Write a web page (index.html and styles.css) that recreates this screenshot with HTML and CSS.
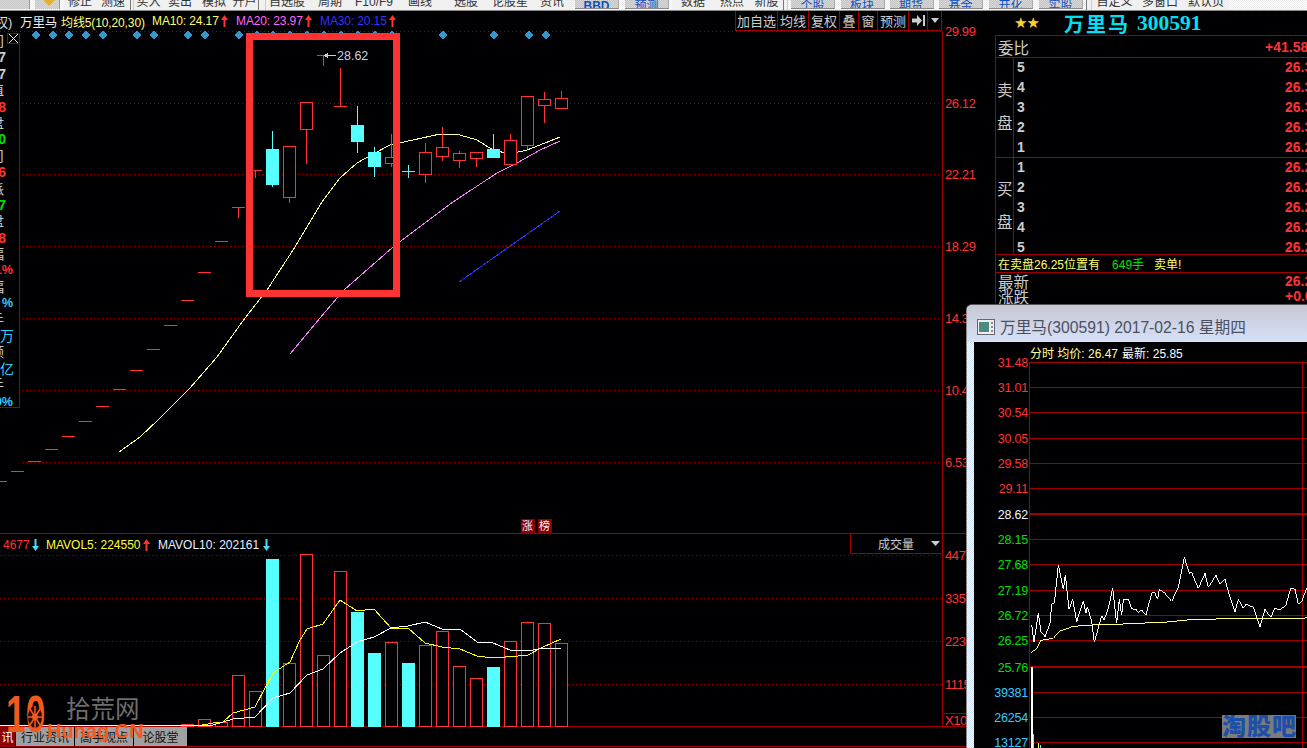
FILE: index.html
```html
<!DOCTYPE html>
<html lang="zh">
<head>
<meta charset="utf-8">
<title>万里马 300591</title>
<link rel="stylesheet" href="styles.css">
</head>
<body>
<div class="app">
  <svg class="defs" width="0" height="0" aria-hidden="true">
    <symbol id="arrow-up" viewBox="0 0 7 12"><path d="M3.5 0L7 5H4.5V12H2.5V5H0Z"/></symbol>
    <symbol id="arrow-down" viewBox="0 0 7 12"><path d="M3.5 12L7 7H4.5V0H2.5V7H0Z"/></symbol>
  </svg>

  <nav class="toolbar">
    <span class="tb-pic"></span>
    <span class="tb-pic tb-pic-gem"><svg width="25" height="10" viewBox="0 0 25 10"><path d="M8 0H20L14 6Z" fill="#e8b030"/></svg></span>
    <span class="tb">修正</span><span class="tb">测速</span><span class="tb-sep"></span>
    <span class="tb">买入</span><span class="tb">卖出</span><span class="tb">模拟</span><span class="tb">开户</span><span class="tb-sep"></span>
    <span class="tb">自选股</span><span class="tb">周期</span><span class="tb">F10/F9</span><span class="tb">画线</span><span class="tb">选股</span><span class="tb">论股星</span><span class="tb">资讯</span>
    <span class="tb-btn tb-strong">BBD</span><span class="tb-btn">预测</span>
    <span class="tb">数据</span><span class="tb">热点</span><span class="tb">新股</span><span class="tb-sep"></span>
    <span class="tb-btn">个股</span><span class="tb-btn">板块</span><span class="tb-btn">期货</span><span class="tb-btn">基金</span><span class="tb-btn">开化</span><span class="tb-btn">实股</span><span class="tb-sep"></span>
    <span class="tb">自定义</span><span class="tb">多窗口</span><span class="tb">默认页</span>
  </nav>

  <main class="workspace">
    <section class="chart-col">
      <header class="info-row">
        <div class="legend">
          <span class="lg lg-stub">权)</span>
          <span class="lg lg-name">万里马</span>
          <span class="lg lg-ma">均线5(10,20,30)</span>
          <span class="lg lg-10">MA10: 24.17</span><svg class="arr arr-up"><use href="#arrow-up"/></svg>
          <span class="lg lg-20">MA20: 23.97</span><svg class="arr arr-up"><use href="#arrow-up"/></svg>
          <span class="lg lg-30">MA30: 20.15</span><svg class="arr arr-up"><use href="#arrow-up"/></svg>
        </div>
        <div class="chart-btns">
          <span class="cb cb-3">加自选</span><span class="cb cb-2">均线</span><span class="cb cb-2">复权</span><span class="cb cb-1">叠</span><span class="cb cb-1">窗</span><span class="cb cb-2">预测</span>
          <span class="cb cb-1"><svg width="13" height="11" viewBox="0 0 13 11"><path d="M0 3.500H5V0L10 5.500L5 11V7.500H0Z M11 0H13V11H11Z" fill="#ccc"/></svg></span>
          <span class="cb cb-drop"><svg width="8" height="5" viewBox="0 0 8 5"><path d="M0 0H8L4 5Z" fill="#ccc"/></svg></span>
        </div>
      </header>

      <div class="price-pane">
        <svg class="plot" width="995" height="503" viewBox="0 31 995 503">
          <path class="dot" d="M0 31.500H942M22 103.500H942M22 174.500H942M22 246.500H942M22 318.500H942M22 390.500H942M22 462.500H942"/>
          <path class="solid" d="M942.500 31V534M0 533.500H995"/>
          <g class="diamonds">
            <path d="M36 30.500l4.500 4.500-4.500 4.500-4.500-4.500ZM53 30.500l4.500 4.500-4.500 4.500-4.500-4.500ZM69 30.500l4.500 4.500-4.500 4.500-4.500-4.500ZM86 30.500l4.500 4.500-4.500 4.500-4.500-4.500ZM103 30.500l4.500 4.500-4.500 4.500-4.500-4.500ZM137 30.500l4.500 4.500-4.500 4.500-4.500-4.500ZM154 30.500l4.500 4.500-4.500 4.500-4.500-4.500ZM188 30.500l4.500 4.500-4.500 4.500-4.500-4.500ZM205 30.500l4.500 4.500-4.500 4.500-4.500-4.500ZM239 30.500l4.500 4.500-4.500 4.500-4.500-4.500ZM257 30.500l4.500 4.500-4.500 4.500-4.500-4.500ZM273 30.500l4.500 4.500-4.500 4.500-4.500-4.500ZM290 30.500l4.500 4.500-4.500 4.500-4.500-4.500ZM307 30.500l4.500 4.500-4.500 4.500-4.500-4.500ZM324 30.500l4.500 4.500-4.500 4.500-4.500-4.500ZM341 30.500l4.500 4.500-4.500 4.500-4.500-4.500ZM358 30.500l4.500 4.500-4.500 4.500-4.500-4.500ZM375 30.500l4.500 4.500-4.500 4.500-4.500-4.500ZM392 30.500l4.500 4.500-4.500 4.500-4.500-4.500ZM443 30.500l4.500 4.500-4.500 4.500-4.500-4.500ZM494 30.500l4.500 4.500-4.500 4.500-4.500-4.500ZM529 30.500l4.500 4.500-4.500 4.500-4.500-4.500ZM546 30.500l4.500 4.500-4.500 4.500-4.500-4.500Z"/>
          </g>
          <path class="ma ma10" d="M119 452L140 437L158 420L190 388L217 357L245 318L267 290L295 247L322 202L340 178L357 163L375 153L390 145L413 140L440 134L460 135L477 140L493 150L510 154L527 150L545 143L560 137"/>
          <path class="ma ma20" d="M290 354L320 318L344 290L393 247L453 202L497 173L517 163L540 150L560 141"/>
          <path class="ma ma30" d="M459 282L560 211"/>
          <path class="wick" d="M0 481.500H7M11 471.500H24M28 461.500H41M45 449.500H58M62 436.500H75M79 421.500H92M96 406.500H109M113 389.500H126M130 370.500H143M147 349.500H160M164 325.500H177M181 300.500H194M198 272.500H211M215 241.500H228M232 207.500H245M249 170.500H262M317 55.500H329M334 106.500H347M238.500 207V218M255.500 170V178M289.500 197V203M306.500 129V164M323.500 55V66M340.500 68V106M391.500 134V157M391.500 163V167M425.500 143V152M425.500 174V183M442.500 127V147M442.500 156V161M459.500 151V153M459.500 160V168M476.500 158V167M510.500 134V140M527.500 145V149M544.500 92V99M544.500 105V123M561.500 91V98M561.500 108V109"/>
          <g class="up">
            <rect x="283.500" y="146.500" width="12" height="51"/><rect x="300.500" y="102.500" width="12" height="27"/><rect x="385.500" y="157.500" width="12" height="6"/><rect x="419.500" y="152.500" width="12" height="22"/><rect x="436.500" y="147.500" width="12" height="9"/><rect x="453.500" y="153.500" width="12" height="7"/><rect x="470.500" y="152.500" width="12" height="6"/><rect x="504.500" y="140.500" width="12" height="24"/><rect x="521.500" y="96.500" width="12" height="49"/><rect x="538.500" y="99.500" width="12" height="6"/><rect x="555.500" y="98.500" width="12" height="10"/>
          </g>
          <path class="wick-down" d="M272.500 131V187M357.500 106V153M374.500 147V177M408.500 165V178M402 171.500H415M493.500 134V149"/>
          <g class="down">
            <rect x="266" y="149" width="13" height="36"/><rect x="351" y="125" width="13" height="17"/><rect x="368" y="152" width="13" height="15"/><rect x="487" y="149" width="13" height="9"/>
          </g>
          <path class="peak-line" d="M324 55.500H336"/><path class="peak-head" d="M324 55.500L328 52.500V58.500Z"/>
          <text class="t-peak" x="337" y="60">28.62</text>
          <rect class="highlight" x="249.500" y="36.500" width="147" height="257"/>
          <g class="t-axis">
            <text x="945" y="36">29.99</text><text x="945" y="108">26.12</text><text x="945" y="179">22.21</text><text x="945" y="251">18.29</text><text x="945" y="323">14.37</text><text x="945" y="395">10.45</text><text x="945" y="467">6.53</text>
          </g>
          <rect class="badge" x="521" y="519" width="14" height="14"/><rect class="badge" x="538" y="519" width="14" height="14"/>
          <text class="t-badge" x="522" y="530">涨</text><text class="t-badge" x="539" y="530">榜</text>
        </svg>
        <aside class="stats">
          <span class="close-box"><svg width="11" height="10" viewBox="0 0 11 10"><path d="M1 0L10 9M10 0L1 9" stroke="#eee" fill="none"/></svg></span>
          <span class="st st-l">间</span><span class="st st-v st-w">7</span><span class="st st-v st-w">7</span><span class="st st-l">值</span><span class="st st-v st-r">8</span><span class="st st-l">盘</span><span class="st st-v st-g">0</span><span class="st st-l">司</span><span class="st st-v st-r">6</span><span class="st st-l">派</span><span class="st st-v st-g">7</span><span class="st st-l">盘</span><span class="st st-v st-r">8</span><span class="st st-l">幅</span><span class="st st-p st-r">1%</span><span class="st st-l">幅</span><span class="st st-p st-c">%</span><span class="st st-l">手</span><span class="st st-u">万</span><span class="st st-l">额</span><span class="st st-u">亿</span><span class="st st-l">手</span><span class="st st-p st-c">0%</span>
        </aside>
      </div>

      <div class="vol-pane">
        <svg class="plot" width="995" height="193" viewBox="0 534 995 193">
          <path class="dot" d="M0 555.500H942M0 598.500H942M0 641.500H942M0 684.500H942"/>
          <path class="solid" d="M942.500 534V727M850.500 534V553M850 553.500H942M0 726.500H995M943 713.500H995"/>
          <path class="wick" d="M0 725.500H7M11 725.500H24M28 725.500H41M45 725.500H58M62 725.500H75M79 725.500H92M96 725.500H109M113 725.500H126M130 725.500H143M147 725.500H160M164 725.500H177"/>
          <g class="up">
            <rect x="181.500" y="724.500" width="12" height="2"/><rect x="198.500" y="719.500" width="12" height="7"/><rect x="215.500" y="722.500" width="12" height="4"/><rect x="232.500" y="675.500" width="12" height="51"/><rect x="249.500" y="691.500" width="12" height="35"/><rect x="283.500" y="663.500" width="12" height="63"/><rect x="300.500" y="554.500" width="12" height="172"/><rect x="317.500" y="655.500" width="12" height="71"/><rect x="334.500" y="571.500" width="12" height="155"/><rect x="385.500" y="642.500" width="12" height="84"/><rect x="419.500" y="645.500" width="12" height="81"/><rect x="436.500" y="631.500" width="12" height="95"/><rect x="453.500" y="666.500" width="12" height="60"/><rect x="470.500" y="678.500" width="12" height="48"/><rect x="504.500" y="641.500" width="12" height="85"/><rect x="521.500" y="622.500" width="12" height="104"/><rect x="538.500" y="623.500" width="12" height="103"/><rect x="555.500" y="643.500" width="12" height="83"/>
          </g>
          <g class="down">
            <rect x="266" y="559" width="13" height="168"/><rect x="351" y="612" width="13" height="115"/><rect x="368" y="653" width="13" height="74"/><rect x="402" y="663" width="13" height="64"/><rect x="487" y="667" width="13" height="60"/>
          </g>
          <path class="ma vol5" d="M0 725.500H200L213 723L223 722L233 713L255 707L273 673L290 662L300 640L307 629L323 624L340 600L357 611L374 609L391 628L408 628L425 643L442 647L460 649L477 656L493 658L518 656L528 655L543 647L561 639"/>
          <path class="ma vol10" d="M0 725.500H200L213 725L233 719L255 717L273 698L290 693L307 675L323 669L340 653L357 642L374 637L391 628L408 626L425 622L442 629L460 629L477 642L493 643L510 650L528 651L543 648L561 648"/>
          <g class="t-axis">
            <text x="945" y="560">447</text><text x="945" y="603">335</text><text x="945" y="646">223</text><text x="945" y="689">1115</text><text x="945" y="725">X10</text>
          </g>
        </svg>
        <div class="vol-head">
          <span class="vh vh-r">4677</span><svg class="arr arr-down"><use href="#arrow-down"/></svg>
          <span class="vh vh-y">MAVOL5: 224550</span><svg class="arr arr-up"><use href="#arrow-up"/></svg>
          <span class="vh vh-w">MAVOL10: 202161</span><svg class="arr arr-down"><use href="#arrow-down"/></svg>
        </div>
        <div class="vol-select"><span>成交量</span><svg width="9" height="5" viewBox="0 0 9 5"><path d="M0 0H9L4.500 5Z" fill="#ccc"/></svg></div>
      </div>

      <div class="tabs">
        <span class="tab tab-on">讯</span><span class="tab tab-a">行业资讯</span><span class="tab tab-a">高手观点</span><span class="tab tab-b">论股堂</span>
      </div>

      <div class="wm">
        <div class="wm-ten"><span class="wm-num">10</span>
          <svg class="wm-gear" width="16" height="24" viewBox="0 0 16 24"><ellipse cx="8" cy="12" rx="7" ry="11" fill="#2a0a04"/><path d="M8 1V23M1 12H15M3 4L13 20M13 4L3 20" stroke="#f05a1e" stroke-width="1.500"/><circle cx="8" cy="12" r="3" fill="#f05a1e"/></svg>
        </div>
        <div class="wm-text"><span class="wm-site">拾荒网</span><span class="wm-dom">Hunag.CN</span></div>
      </div>
    </section>

    <section class="quote">
      <div class="q-title"><span class="q-stars">★★</span><span class="q-name">万里马</span><span class="q-code">300591</span></div>
      <div class="q-box">
        <div class="q-ratio"><span class="q-label">委比</span><span class="q-ratio-v">+41.58</span></div>
        <div class="q-side q-side-sell">
          <div class="q-tag"><span>卖</span><span>盘</span></div>
          <div class="q-rows">
            <div class="q-row"><b>5</b><span>26.3</span></div><div class="q-row"><b>4</b><span>26.3</span></div><div class="q-row"><b>3</b><span>26.3</span></div><div class="q-row"><b>2</b><span>26.3</span></div><div class="q-row"><b>1</b><span>26.2</span></div>
          </div>
        </div>
        <div class="q-side q-side-buy">
          <div class="q-tag"><span>买</span><span>盘</span></div>
          <div class="q-rows">
            <div class="q-row"><b>1</b><span>26.2</span></div><div class="q-row"><b>2</b><span>26.2</span></div><div class="q-row"><b>3</b><span>26.2</span></div><div class="q-row"><b>4</b><span>26.2</span></div><div class="q-row"><b>5</b><span>26.2</span></div>
          </div>
        </div>
        <div class="q-msg"><span class="m-y">在卖盘26.25位置有</span><span class="m-g">649手</span><span class="m-y">卖单!</span></div>
        <div class="q-last"><span class="q-label">最新</span><span class="q-last-v">26.2</span></div>
        <div class="q-last"><span class="q-label">涨跌</span><span class="q-last-v">+0.0</span></div>
      </div>
    </section>

    <article class="float-win">
      <div class="fw-title">
        <svg width="18" height="16" viewBox="0 0 18 16"><rect x="0.500" y="0.500" width="17" height="15" fill="#eee" stroke="#667"/><rect x="2" y="3" width="10" height="10" fill="#4c8a80"/><path d="M14 3h2v2h-2zM14 7h2v2h-2zM14 11h2v2h-2z" fill="#889"/></svg>
        <span>万里马(300591) 2017-02-16 星期四</span>
      </div>
      <div class="fw-body">
        <svg class="plot" width="333" height="406" viewBox="974 342 333 406">
          <path class="fw-grid" d="M1029.500 362V748M1302.500 362V748M1029 362.500H1307M1029 387.500H1307M1029 412.500H1307M1029 438.500H1307M1029 463.500H1307M1029 488.500H1307M1029 539.500H1307M1029 564.500H1307M1029 590.500H1307M1029 615.500H1307M1029 640.500H1307M1029 692.500H1307M1029 717.500H1307M1029 742.500H1307"/>
          <path class="fw-thick" d="M1029 514H1307M1029 667H1307"/>
          <g transform="translate(960 530) scale(.33333)">
            <polyline class="tick tick-avg" points="213,368 228,358 243,331 280,325 300,303 340,289 400,285 460,285 510,280 600,278 680,270 800,266 1040,264"/>
            <polyline class="tick tick-price" points="215,285 222,335 235,250 243,305 255,320 270,280 275,222 283,220 295,105 310,178 316,135 327,238 338,208 350,275 370,213 378,250 382,230 395,275 403,337 425,257 432,270 445,235 458,175 470,280 478,208 485,255 490,210 505,208 515,236 530,240 535,248 545,240 558,255 575,190 583,185 593,208 598,178 615,190 635,214 655,172 673,82 688,130 695,128 715,175 735,130 745,172 768,136 780,162 795,148 810,202 825,245 835,208 850,235 858,222 880,232 900,290 915,238 932,262 945,235 960,240 978,225 992,175 1005,178 1015,222 1025,215 1040,175"/>
          </g>
          <path class="fw-v-w" d="M1032 667V748"/><path class="fw-v-c" d="M1033.500 734V748M1040.500 745V748"/><path class="fw-v-y" d="M1038.500 743V748"/>
          <g class="t-fw">
            <text class="c-r" x="1028" y="367">31.48</text><text class="c-r" x="1028" y="392">31.01</text><text class="c-r" x="1028" y="417">30.54</text><text class="c-r" x="1028" y="443">30.05</text><text class="c-r" x="1028" y="468">29.58</text><text class="c-r" x="1028" y="493">29.11</text>
            <text class="c-w" x="1028" y="519">28.62</text>
            <text class="c-g" x="1028" y="544">28.15</text><text class="c-g" x="1028" y="569">27.68</text><text class="c-g" x="1028" y="595">27.19</text><text class="c-g" x="1028" y="620">26.72</text><text class="c-g" x="1028" y="645">26.25</text><text class="c-g" x="1028" y="672">25.76</text>
            <text class="c-c" x="1028" y="697">39381</text><text class="c-c" x="1028" y="722">26254</text><text class="c-c" x="1028" y="747">13127</text>
          </g>
        </svg>
        <div class="fw-head"><span class="fh-y">分时 均价: 26.47</span><span class="fh-w">最新: 25.85</span></div>
        <div class="fw-mark">淘股吧</div>
      </div>
    </article>
  </main>
</div>
</body>
</html>
```

FILE: styles.css
```css
* { box-sizing: border-box; }
html, body { margin: 0; padding: 0; background: #000003; }
body { font-family: "Liberation Sans", "Noto Sans CJK SC", sans-serif; }
.app { width: 1307px; height: 748px; overflow: hidden; background: #000003; position: relative; }
.defs { position: absolute; }

/* toolbar, cut off by the top of the capture */
.toolbar {
  height: 11px; overflow: hidden; border-bottom: 1px solid #888;
  display: grid; align-items: start; font-size: 12px; color: #333;
  grid-template-columns: 30px 34px 32px 34px 4px 29px 34px 34px 27px 8px 42px 44px 44px 48px 44px 44px 40px 50px 50px 42px 36px 33px 5px 50px 49px 49px 50px 50px 50px 6px 45px 46px 46px;
  background: repeating-conic-gradient(#fff 0 25%, #ececec 0 50%) 0 0 / 2px 2px;
}
.tb { line-height: 12px; margin-top: -4px; text-align: center; white-space: nowrap; background: #f0f0f0; height: 16px; }
.tb-sep { height: 10px; border-left: 1px solid #777; border-right: 1px solid #ccc; background: #f0f0f0; }
.tb-btn {
  width: 44px; height: 9px; justify-self: center; text-align: center; color: #0d50c0;
  line-height: 12px; overflow: hidden; border-bottom: 1px solid #888; border-right: 1px solid #aaa;
  background: repeating-conic-gradient(#d8d8d8 0 25%, #c4c4c4 0 50%) 0 0 / 2px 2px;
}
.tb-strong { font-weight: bold; }
.tb-pic { height: 9px; background: repeating-conic-gradient(#d8d8d8 0 25%, #c8c8c8 0 50%) 0 0 / 2px 2px; border-right: 1px solid #999; }
.tb-pic-gem { margin-left: 5px; margin-right: 4px; }
.tb-pic-gem svg { display: block; }

/* workspace */
.workspace { display: flex; height: 737px; position: relative; }
.chart-col { width: 995px; flex: none; display: flex; flex-direction: column; position: relative; }
.plot { display: block; shape-rendering: crispEdges; overflow: visible; }

.info-row { height: 20px; flex: none; display: flex; justify-content: space-between; width: 942px; position: relative; z-index: 1; }
.legend { display: flex; align-items: center; font-size: 12px; height: 20px; }
.lg { white-space: nowrap; letter-spacing: -0.12px; }
.lg-stub { width: 25px; margin-left: -5px; color: #ddd; font-size: 13px; }
.lg-name { width: 41px; color: #eee; font-size: 12.500px; }
.lg-ma { width: 91px; color: #ffff80; }
.lg-10 { width: 69px; color: #ffff66; }
.lg-20 { width: 69px; color: #ff66ff; margin-left: 8px; }
.lg-30 { width: 69px; color: #3333ff; margin-left: 8px; }
.arr { width: 7px; height: 12px; flex: none; display: block; }
.arr-up { fill: #ff3333; }
.arr-down { fill: #44ddff; }
.chart-btns { display: flex; height: 20px; border-bottom: 1px solid #a00000; }
.cb {
  display: flex; align-items: center; justify-content: center; color: #ccc; font-size: 13px;
  border-left: 1px solid #a00000; white-space: nowrap;
}
.cb-3 { width: 42px; }
.cb-2 { width: 31px; }
.cb-1 { width: 19px; }
.cb-drop { width: 15px; border-right: 1px solid #a00000; }

.price-pane { height: 503px; flex: none; position: relative; }
.vol-pane { height: 193px; flex: none; position: relative; }

.dot { stroke: #a00000; stroke-dasharray: 1 3; fill: none; }
.solid { stroke: #a00000; fill: none; }
.diamonds { fill: #3399cc; }
.ma { fill: none; stroke-width: 1; }
.ma10 { stroke: #ffff99; }
.ma20 { stroke: #ff80ff; }
.ma30 { stroke: #3333ff; }
.vol5 { stroke: #ffff00; }
.vol10 { stroke: #ffffff; }
.wick { stroke: #ff3333; fill: none; }
.wick-down { stroke: #55ffff; fill: none; }
.up rect { fill: #000003; stroke: #ff3333; }
.down rect { fill: #55ffff; }
.peak-line { stroke: #cccccc; }
.peak-head { fill: #cccccc; }
.t-peak { fill: #c8d4e0; font-size: 12.500px; }
.highlight { fill: none; stroke: #ff3333; stroke-width: 7; }
.t-axis text { fill: #ff3333; font-size: 13px; letter-spacing: -0.4px; }
.badge { fill: #8a0000; }
.t-badge { fill: #eee; font-size: 11px; }

/* left stats strip lying over the chart */
.stats {
  position: absolute; left: 0; top: 2px; width: 20px; height: 375px; overflow: hidden;
  display: flex; flex-direction: column;
  border-right: 1px solid #a00000; border-bottom: 1px solid #a00000;
}
.close-box { position: absolute; right: 0; top: 0; width: 12px; height: 11px; border: 1px solid #a00000; border-right: 0; }
.close-box svg { display: block; }
.st { height: 16.400px; line-height: 16.400px; flex: none; display: flex; justify-content: flex-end; white-space: nowrap; font-size: 14px; }
.st-l { color: #ccc; padding-right: 15px; }
.st-v { font-weight: bold; padding-right: 13px; }
.st-p { font-weight: bold; font-size: 12.500px; padding-right: 6px; }
.st-u { color: #33ccff; padding-right: 5px; }
.st-w { color: #ccc; }
.st-r { color: #ff3333; }
.st-g { color: #00e000; }
.st-c { color: #33ccff; }

.vol-head { position: absolute; left: 3px; top: 4px; display: flex; align-items: center; height: 14px; font-size: 12px; white-space: nowrap; }
.vh-r { color: #ff3333; width: 29px; }
.vh-y { color: #ffff33; width: 94px; margin-left: 7px; }
.vh-w { color: #e8f0ff; width: 102px; margin-left: 8px; }
.vh-y + .arr, .vh-w + .arr { margin-left: 3px; }
.vol-select {
  position: absolute; left: 851px; top: 0; width: 91px; height: 19px;
  display: flex; align-items: center; color: #ccc; font-size: 12px;
}
.vol-select span { margin-left: 27px; width: 53px; }

.tabs { height: 20px; flex: none; display: flex; width: 995px; border-bottom: 1px solid #a00000; font-size: 12px; }
.tab { height: 19px; display: flex; align-items: center; justify-content: center; white-space: nowrap; color: #111; background: #a0a0a0; margin-right: 1px; }
.tab-on { width: 15px; background: #8a0000; color: #fff; }
.tab-a { width: 58px; }
.tab-b { width: 53px; }

/* site watermark over the lower left corner */
.wm { position: absolute; left: 6px; top: 686px; display: flex; pointer-events: none; }
.wm-ten { width: 41px; height: 44px; position: relative; }
.wm-num {
  display: block; font-size: 52px; line-height: 44px; font-weight: bold; color: #f05a1e; margin-top: -5px;
  transform: scaleX(.68); transform-origin: left center; white-space: nowrap;
}
.wm-gear { position: absolute; left: 21px; top: 8px; }
.wm-text { display: flex; flex-direction: column; }
.wm-site { font-size: 24.500px; line-height: 26px; color: #6e6e6e; margin-left: 19px; white-space: nowrap; }
.wm-dom { font-size: 20px; font-weight: bold; line-height: 17px; color: #f05a1e; white-space: nowrap; }

/* quote panel */
.quote { width: 312px; flex: none; }
.q-title { height: 24px; display: flex; align-items: center; white-space: nowrap; font-family: "Liberation Serif", "Noto Sans CJK SC", serif; font-weight: bold; color: #00e0f0; }
.q-stars { color: #ffcc33; font-size: 15px; margin-left: 19px; width: 50px; letter-spacing: -1px; font-family: "DejaVu Sans", sans-serif; }
.q-name { font-size: 20px; letter-spacing: 2px; width: 73px; }
.q-code { font-size: 21.500px; }
.q-box { border-left: 1px solid #a00000; }
.q-ratio { height: 23px; border-top: 1px solid #a00000; border-bottom: 1px solid #a00000; display: flex; align-items: center; justify-content: space-between; }
.q-label { color: #ccc; font-size: 15.500px; padding-left: 2px; white-space: nowrap; }
.q-ratio-v { color: #ff3333; font-size: 14px; font-weight: bold; width: 42px; white-space: nowrap; }
.q-side { display: flex; border-bottom: 1px solid #a00000; }
.q-side-sell { height: 100px; }
.q-side-buy { height: 97px; }
.q-tag { width: 18px; flex: none; border-right: 1px solid #a00000; display: flex; flex-direction: column; justify-content: center; gap: 17px; color: #ccc; font-size: 15.500px; line-height: 16px; padding-left: 1px; }
.q-rows { flex: 1; display: flex; flex-direction: column; min-width: 0; margin-top: -1px; }
.q-row { height: 20px; flex: none; display: flex; justify-content: space-between; align-items: center; padding-left: 3px; font-size: 14px; font-weight: bold; }
.q-row b { color: #ccc; }
.q-row span { color: #ff3333; width: 22px; white-space: nowrap; }
.q-msg { height: 18px; border-bottom: 1px solid #a00000; display: flex; align-items: center; padding-left: 2px; font-size: 12px; white-space: nowrap; }
.m-y { color: #ffff66; }
.m-g { color: #00e000; margin: 0 10px 0 12px; }
.q-last { height: 15px; display: flex; align-items: center; justify-content: space-between; }
.q-last-v { color: #ff3333; font-size: 14px; font-weight: bold; width: 22px; white-space: nowrap; }

/* floating intraday window */
.float-win {
  position: absolute; left: 966px; top: 293px; right: 0; bottom: 0;
  border-top: 1px solid #555; border-left: 1px solid #888; border-top-left-radius: 6px; overflow: hidden;
  display: flex; flex-direction: column;
  background: repeating-conic-gradient(#fff 0 25%, #cfe0ff 0 50%) 0 0 / 2px 2px;
}
.fw-title {
  height: 37px; flex: none; display: flex; align-items: center; gap: 5px; padding: 6px 0 0 10px;
  color: #4a5060; font-size: 15.700px; white-space: nowrap;
  background: linear-gradient(#c8c8d6, #d6e0f6);
}
.fw-title svg { flex: none; display: block; }
.fw-body { margin-left: 7px; background: #000003; flex: 1; position: relative; }
.fw-grid { stroke: #a00000; fill: none; }
.fw-thick { stroke: #a00000; stroke-width: 2; fill: none; }
.tick { fill: none; stroke-width: 3; }
.tick-price { stroke: #fff; }
.tick-avg { stroke: #ffff80; }
.fw-v-w { stroke: #fff; stroke-width: 2; }
.fw-v-c { stroke: #55ffff; }
.fw-v-y { stroke: #ffff66; }
.t-fw text { font-size: 12.500px; text-anchor: end; letter-spacing: -0.200px; }
.c-r { fill: #ff3333; }
.c-w { fill: #f0f4ff; }
.c-g { fill: #00e000; }
.c-c { fill: #33ccff; }
.fw-head { position: absolute; left: 56px; top: 2px; height: 16px; display: flex; gap: 4px; align-items: center; font-size: 12px; white-space: nowrap; }
.fh-y { color: #ffff99; }
.fh-w { color: #fff; }
.fw-mark {
  position: absolute; left: 248px; top: 373px; width: 74px; height: 23px;
  font-size: 24px; line-height: 23px; font-weight: 900; letter-spacing: 1px; white-space: nowrap;
  color: #1c50a8; background: #7c7c7c; text-align: center; overflow: hidden;
}
```
